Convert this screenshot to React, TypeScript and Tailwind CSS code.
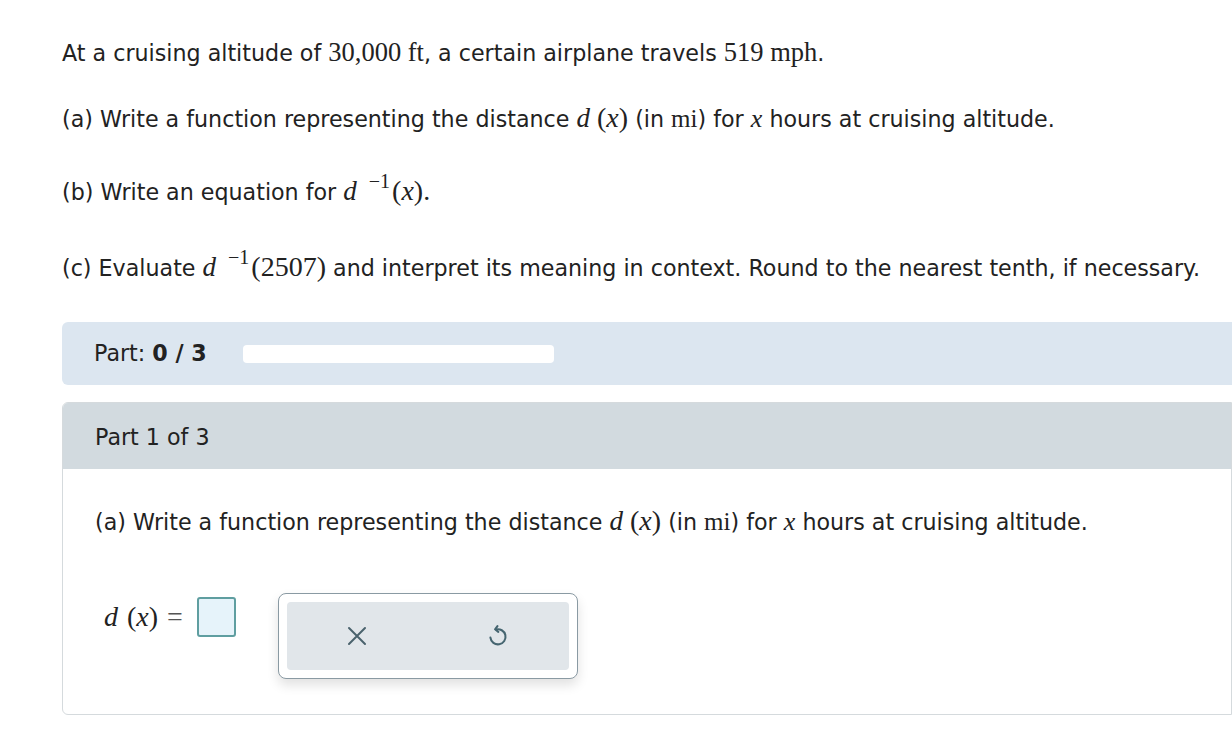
export default function App() {
  const serif = "font-['Liberation_Serif',serif]";
  return (
    <div className="min-h-[733px] bg-white font-['DejaVu_Sans',Verdana,sans-serif] text-[22.2px] text-[#222] overflow-hidden">
      <div className="pl-[62px] pt-[36px] whitespace-nowrap">
        <p className="h-[32px] leading-[32px]">
          At a cruising altitude of <span className={`${serif} text-[26.5px]`}>30,000 ft</span>, a certain airplane travels{' '}
          <span className={`${serif} text-[26.5px]`}>519 mph</span>.
        </p>
        <p className="mt-[34px] h-[32px] leading-[32px]">
          (a) Write a function representing the distance <span className={`${serif} text-[27px] italic`}>d</span>{' '}
          <span className={`${serif} text-[28px]`}>(<i>x</i>)</span> (in <span className={`${serif} text-[25px]`}>mi</span>) for{' '}
          <span className={`${serif} text-[26px] italic`}>x</span> hours at cruising altitude.
        </p>
        <p className="mt-[41px] h-[32px] leading-[32px]">
          (b) Write an equation for <span className={`${serif} text-[27px] italic`}>d</span>
          <sup className={`${serif} text-[20px] ml-[12px] mr-[2px] top-[-12px]`}>−1</sup>
          <span className={`${serif} text-[28px]`}>(<i>x</i>).</span>
        </p>
        <p className="mt-[44px] h-[32px] leading-[32px]">
          (c) Evaluate <span className={`${serif} text-[27px] italic`}>d</span>
          <sup className={`${serif} text-[20px] ml-[12px] mr-[2px] top-[-12px]`}>−1</sup>
          <span className={`${serif} text-[28px]`}>(2507)</span> and interpret its meaning in context. Round to the nearest tenth, if necessary.
        </p>
      </div>

      <div className="ml-[62px] mt-[39px]">
        <div className="h-[63px] bg-[#dce6f0] rounded-l-[6px] flex items-center pl-[32px]">
          <span>
            Part: <b>0 / 3</b>
          </span>
          <div className="ml-[36px] w-[311px] h-[18px] bg-white rounded-[4px]" />
        </div>

        <div className="mt-[17px] border border-[#d5dadd] rounded-l-[6px] overflow-hidden h-[313px]">
          <div className="h-[66px] bg-[#d2dadf] flex items-center pl-[32px] pt-[3px]">Part 1 of 3</div>
          <div className="pl-[32px] whitespace-nowrap">
            <p className="mt-[36px] h-[32px] leading-[32px]">
              (a) Write a function representing the distance <span className={`${serif} text-[27px] italic`}>d</span>{' '}
              <span className={`${serif} text-[28px]`}>(<i>x</i>)</span> (in <span className={`${serif} text-[25px]`}>mi</span>) for{' '}
              <span className={`${serif} text-[26px] italic`}>x</span> hours at cruising altitude.
            </p>
            <div className="mt-[56px] flex items-start">
              <div className={`${serif} text-[28px] flex items-center ml-[9px] mt-[4px] h-[40px]`}>
                <i>d</i>
                <span className="ml-[9px]">(<i>x</i>)</span>
                <span className="ml-[9px] text-[#555]">=</span>
                <div className="ml-[14px] w-[39px] h-[40px] border-2 border-[#5f9ea0] rounded-[3px] bg-[#e6f3fa]" />
              </div>
              <div className="ml-[42px] w-[300px] h-[86px] border border-[#8a9aa3] rounded-[8px] bg-white shadow-[0_6px_12px_rgba(0,0,0,0.12)] p-[8px]">
                <div className="h-full bg-[#e1e6ea] rounded-[4px] flex items-center">
                  <div className="w-[141px] flex justify-center">
                    <svg width="24" height="24" viewBox="0 0 24 24" fill="none" stroke="#4a626d" strokeWidth="2" strokeLinecap="round">
                      <path d="M4 4 L20 20 M20 4 L4 20" />
                    </svg>
                  </div>
                  <div className="w-[141px] flex justify-center">
                    <svg width="26" height="26" viewBox="0 0 24 24" fill="none" stroke="#456570" strokeWidth="1.9" strokeLinecap="round" strokeLinejoin="round">
                      <path d="M10 6 A7 7 0 1 1 5 13.5" />
                      <path d="M11.5 2.8 L9.3 5.8 L12.3 8.2" />
                    </svg>
                  </div>
                </div>
              </div>
            </div>
          </div>
        </div>
      </div>
    </div>
  );
}
